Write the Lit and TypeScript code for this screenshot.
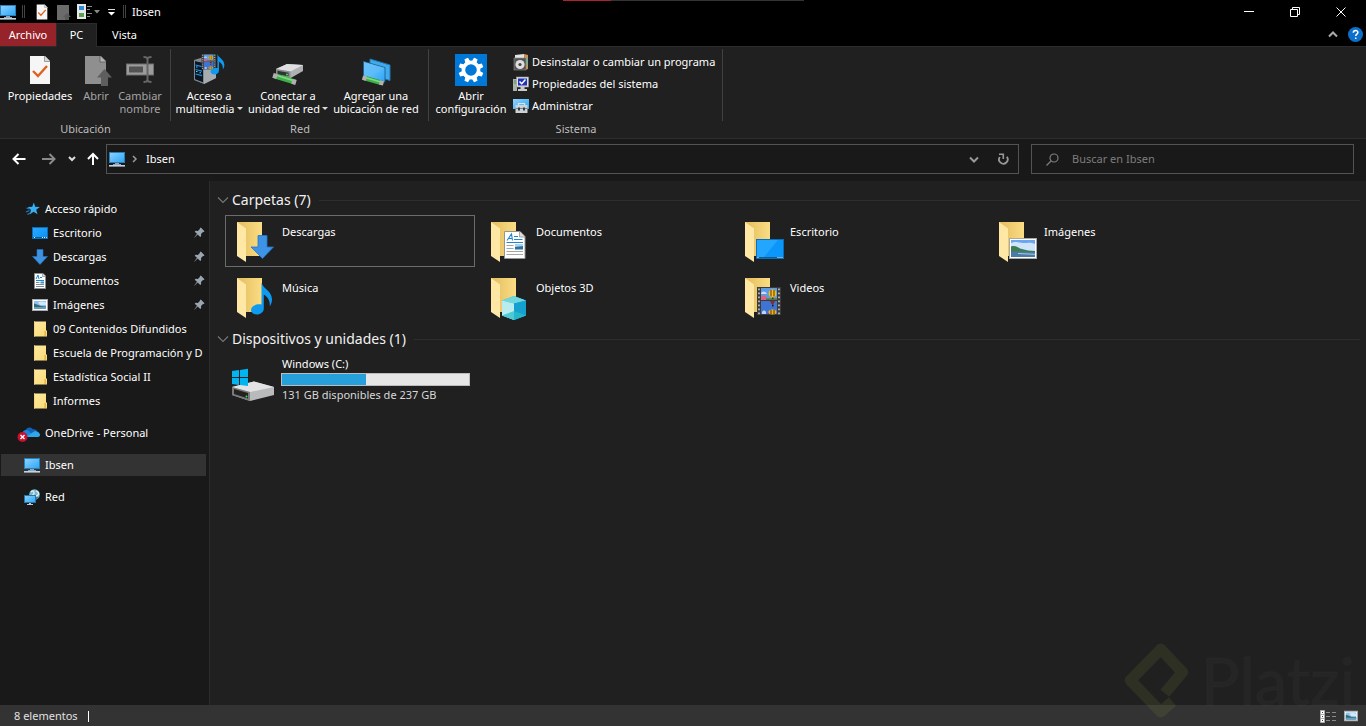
import { LitElement, html, css, svg, nothing, TemplateResult } from "lit";
import { customElement, state } from "lit/decorators.js";

type Art = TemplateResult;

/** Wraps drawing content in an <svg> of the given size. */
const icon = (w: number, h: number, art: Art, box = `0 0 ${w} ${h}`) =>
  html`<svg class="ico" width=${w} height=${h} viewBox=${box} aria-hidden="true">${art}</svg>`;

/* ---------- 16px artwork ---------- */
const pcArt = svg`
  <rect x="0.5" y="1.5" width="15" height="10" fill="url(#screen)" stroke="#2b7fb8"/>
  <path d="M6 12h4v1h2v1H4v-1h2z" fill="#8fa9bb"/>
  <rect x="0" y="14" width="16" height="1.6" fill="#c4d3e0"/>`;
const starArt = svg`
  <path d="M9.800 1.500l1.400 4.300 4.600.1-3.600 2.800 1.300 4.600-3.900-2.500-3.900 2.700 1.300-4.600L3.600 6l4.600-.2z" fill="#35b0f2"/>
  <path d="M2.500 7l3 1M2 11l3.500-1.500M3.500 13.500l2.500-1.500" stroke="#1e7fc0" stroke-width="1.200"/>`;
const deskArt = svg`
  <rect x="0.5" y="2.500" width="15" height="11" fill="url(#desk)" stroke="#0a6fb8"/>
  <path d="M1 12.500h14" stroke="#0b5c98"/><path d="M2 12.500h1M10 12.500h1M12 12.500h1M14 12.500h.8" stroke="#fff"/>`;
const downArt = svg`<path d="M5 .5h6v7h4.500L8 15.500.5 7.500H5z" fill="#3d93e0" stroke="#2275c4" stroke-width=".6"/>`;
const docArt = svg`
  <path d="M2.500.5h8.500l2.500 2.500v12.500h-11z" fill="#fff" stroke="#8d8d8d"/>
  <path d="M10.500.5v3h3" fill="#ddd" stroke="#8d8d8d" stroke-width=".7"/>
  <path d="M4 6l2-4 1 4M8 4.500h2M4 7.500h8" stroke="#1a86d0" fill="none"/>
  <path d="M4 9.500h3.500M4 11.500h8M4 13.500h8" stroke="#7c8a96"/><rect x="8.500" y="8.500" width="3.500" height="2" fill="#3f8fc4"/>`;
const photoArt = svg`
  <rect x=".5" y="2.500" width="15" height="11" fill="#fff" stroke="#a9a9a9"/>
  <rect x="2" y="4" width="12" height="8" fill="#8dc1ef"/><path d="M6 5.500c3-1.500 5-1 8 0V8H8z" fill="#d5e8fa"/>
  <path d="M2 6.500l3 1 4 1.500 5 .5V12H2z" fill="#2f6f72"/><path d="M2 10h12v2H2z" fill="#6d9cc0"/>`;
const folderArt = svg`
  <path d="M2 .5h12v9h1v6H2z" fill="url(#fold)"/><path d="M12.500 10h1.500v5h-1.500z" fill="#e2b74a"/>
  <path d="M2.500.5v15" stroke="#f8d675"/>`;
const netArt = svg`
  <circle cx="10.500" cy="5.500" r="5.300" fill="#7db8cf"/>
  <path d="M7 3c2-2 3-1 3 1s-2 2-2 3M12 2c3 1 3 3 2 4s-2 0-3 2" fill="none" stroke="#e3f3f7" stroke-width="1.300"/>
  <path d="M14.800 8a5.300 5.300 0 01-4 2.800V8z" fill="#3a7c9d"/>
  <rect x=".5" y="6.500" width="11" height="7" fill="url(#screen)" stroke="#2477ad"/>
  <path d="M5 14h2v1h2v1H3v-1h2z" fill="#b7cbd9"/>`;
const cloudArt = svg`
  <path d="M8.500 6.500c.8-3 5-4.200 7.500-1.200 2.500-.4 4 .7 4.200 2.700L14 11z" fill="#0f62b4"/>
  <path d="M7 12a3.200 3.200 0 01.8-5.800c2-.8 4 .2 5 1.600L17 13H9z" fill="#1884d8"/>
  <path d="M9 13l7.500-5.200C19 6.500 22.500 8 23 10.500c.2 1.500-.8 2.500-2 2.500z" fill="#30a7ea"/>
  <circle cx="5.500" cy="13" r="5" fill="#c8102e"/>
  <path d="M3.500 11l4 4m0-4l-4 4" stroke="#fff" stroke-width="1.400"/>`;
const pinArt = svg`<path d="M7.800.5L11.500 4.200l-.9.9-.6-.1-2 2.100.2 1.900-1 1L4.700 7.500.7 11.300 4 6.800 1.700 4.700l1-1 2.100.2L6.900 1.900l-.1-.6z" fill="#9aa5b0"/>`;

/* ---------- ribbon artwork ---------- */
const check = svg`
  <path d="M6 2h15l5 5v23H6z" fill="#f6f6f6"/><path d="M20.500 2v5.500H26" fill="#d6d6d6" stroke="#8c8c8c" stroke-width=".8"/>
  <path d="M9 17l5 5 9-10" fill="none" stroke="#e2601f" stroke-width="2.400"/>`;
const openArt = svg`
  <path d="M5 2h16l5 5v23H5z" fill="#8f8f8f"/><path d="M20 2v6h6" fill="#b5b5b5" stroke="#5c5c5c" stroke-width=".8"/>
  <path d="M24.500 15l7.500 8.500h-4V32h-7v-8.500h-4z" fill="#5e5e5e"/>`;
const renameArt = svg`
  <rect x="2.500" y="10" width="27" height="11" fill="#9c9c9c" stroke="#6f6f6f"/><rect x="5" y="12.500" width="14" height="6" fill="#535353"/>
  <path d="M19.500 3c2.500 0 4 .8 4 2 0-1.200 1.500-2 4-2M19.500 28c2.500 0 4-.8 4-2 0 1.200 1.500 2 4 2M23.500 5v21" fill="none" stroke="#666" stroke-width="2"/>`;
const film = svg`
  <rect width="24" height="28" fill="#3b3b3b"/><rect x="4" y="1" width="16" height="12" fill="#5d9be6"/><rect x="4" y="14" width="16" height="13" fill="#3f74d4"/>
  <path d="M4 10c2-2 4-2 6 1h10v2H4z" fill="#e0607f"/><path d="M9 11.500h11V13H9z" fill="#2c8a43"/><path d="M4 6c2-2 4-2 6 1H4z" fill="#c6dcf8"/>
  <ellipse cx="15.500" cy="6.500" rx="3.800" ry="4" fill="#f0c419"/><path d="M14 3v6.500M17 3v6.500" stroke="#6b2a1b" stroke-width="1"/><path d="M15 10.500h1.500V12H15z" fill="#4d2d12"/>
  <path d="M13 14h5l-1.500 3h-2z" fill="#832e2c"/><path d="M15 17.500h1.500v2H15z" fill="#2a1a12"/>
  <ellipse cx="15.500" cy="25" rx="4" ry="2.500" fill="#e7b91c"/><path d="M14 23v4M17 23v4" stroke="#6b2a1b" stroke-width="1"/><path d="M5 25c1-2 3-2 4 0v2H5z" fill="#bcd4f6"/>
  <path d="M2 1.500v26M22 1.500v26" stroke="#b9b9b9" stroke-width="1.800" stroke-dasharray="1.700 2.300"/>`;
const note = svg`<path d="M10.500 0c1 6 10.500 8 10.500 17 0 3-1 5-2.300 6.800C19.500 17 15 13 12.800 12.300V26c0 3.500-3.300 6-7 6C2.500 32 0 30.300 0 27.500 0 24 5 21 10.500 22z" fill="#0e9af0"/>`;
const mediaArt = svg`
  <path d="M1 6l10-3 12 3v18l-12 6-10-4z" fill="#85898e"/><path d="M1.500 6.500l9 2v20.500l-9-3.500z" fill="#0b1622" stroke="#7d8992" stroke-width="1"/><path d="M11 8.500l12-2.500v18l-12 6z" fill="#a7abb0"/>
  <path d="M2.500 11l6.500 1.600M2.500 15.500l6.500 1.600M2.500 20l6.500 1.600" stroke="#1e8fe0" stroke-width="1.200"/><path d="M3 13h1.500M6.500 18.800H8M3 17.500h1.500" stroke="#5fd0ff"/>
  <g transform="translate(8.500 0) scale(.6 .55)">${film}</g>
  <g transform="translate(17.500 0) scale(.66 .64)">${note}</g>`;
const tube = svg`
  <path d="M3 18l20 6" stroke="#3faf4a" stroke-width="5"/><path d="M5 17.500l16 4.800" stroke="#7ddc7e" stroke-width="1.800"/>
  <path d="M1 17.400l4 1.200M20 23.300l4 1.200" stroke="#b0b0b0" stroke-width="5"/>`;
const connectArt = svg`
  <g transform="translate(0 4)"><path d="M4 11l11-5 16 1v6l-14 8L4 17z" fill="#aeb0b3"/><path d="M4 11l11-5 16 1-12.500 6.500z" fill="#dedfe1"/>
  <path d="M4 11l14.500 2.500V20L4 17z" fill="#8b8e91"/><path d="M5.500 12.700l11 2v3.500l-11-2z" fill="#303336"/><circle cx="15" cy="16.500" r="1" fill="#50e04c"/>${tube}</g>`;
const addNetArt = svg`
  <path d="M10 5l20 6v15.500l-20-6z" fill="#3eaaf0" stroke="#2477ad"/><path d="M3.500 7.500l21.500 6v14.500l-21.500-6z" fill="url(#screen)" stroke="#1d5f8c" stroke-width=".9"/>
  <path d="M4 8l20 5.700L10 23l-6-1.500z" fill="#5cbcf9" opacity=".7"/><path d="M4 24l18 5" stroke="#3faf4a" stroke-width="4.500"/><path d="M5 23.500l15 4.200" stroke="#7ddc7e" stroke-width="1.500"/>
  <path d="M2.500 23.600l4 1.100M19.500 28.300l4 1.100" stroke="#b0b0b0" stroke-width="4.500"/>`;
const gearArt = svg`
  <rect width="32" height="32" fill="#0078d7"/><circle cx="16" cy="16" r="7.600" fill="none" stroke="#fff" stroke-width="3.600"/>
  ${[0, 45, 90, 135, 180, 225, 270, 315].map(a => svg`<path d="M13.400 8l.7-4.500h3.800l.7 4.500z" fill="#fff" transform="rotate(${a + 22.5} 16 16)"/>`)}`;
const uninstallArt = svg`
  <path d="M2 1l9-1v5H2z" fill="#e2e2e2"/><path d="M11 0l4 1v14l-3 1z" fill="#d8914d"/><path d="M11 4l4-1v7l-3 5z" fill="#7fb08b"/>
  <rect x="1" y="4" width="12" height="12" fill="#555" stroke="#8b8b8b" stroke-width=".6"/><circle cx="7" cy="10.500" r="4.600" fill="#dedede"/><circle cx="7" cy="10.500" r="1.600" fill="#444"/>`;
const sysArt = svg`
  <path d="M0 3h4v12H0z" fill="#a8b4a8"/><path d="M1 5h2M1 7h2" stroke="#4c8f51"/><rect x="3.500" y="1" width="12" height="10" fill="#e0e0e0" stroke="#9a9a9a" stroke-width=".6"/>
  <rect x="5" y="2.500" width="9" height="7" fill="#2034b8"/><path d="M6.500 5.500l2.200 2.200L12.500 3.500" stroke="#fff" stroke-width="1.500" fill="none"/><path d="M7.500 11h4v2H14v2H5v-2h2.500z" fill="#c9c9c9"/>`;
const adminArt = svg`
  <rect x="0" y="1" width="16" height="10" fill="url(#screen)"/><path d="M5.500 7V5.500h6V7" fill="none" stroke="#dce3e8" stroke-width="1.200"/>
  <rect x="2.500" y="7" width="12" height="8" fill="#cdd2d6"/><path d="M2.500 10.500h12" stroke="#75808a"/><path d="M5 9.500h2v3H5zM10 9.500h2v3h-2z" fill="#353d44"/>`;

/* ---------- 48px folder overlays ---------- */
const big = (over: Art) => icon(48, 48, svg`
  <path d="M9 5h25v34H9z" fill="url(#back)"/><path d="M9 5l9 6.500V45l-9-6z" fill="url(#flap)"/>${over}`);
const bigDown = svg`<path d="M30 18.500h9V30h6.500L34.500 41.500 23 30h7z" fill="#3d93e6" stroke="#1f76c9" stroke-width=".8"/>`;
const bigDoc = svg`
  <path d="M22.500 14.500h15.500l5 5V41.500H22.500z" fill="#fff" stroke="#949494"/><path d="M37.500 14.500v5.500h5.500" fill="#ddd" stroke="#949494" stroke-width=".8"/>
  <path d="M25 23.500l4.500-6.500 1 6.500M26.500 21.500h4M32 19.500h4M32 22.500h8.500M24.500 25.500h16.500" stroke="#1c86cf" stroke-width="1.100" fill="none"/>
  <path d="M24.500 28.500h7M24.500 31.500h7M24.500 34.500h16.500M24.500 37.500h16.500" stroke="#a5a5a5"/><rect x="33" y="27" width="8" height="5.500" fill="#2f6f9b"/><path d="M33 27h8v2l-8 1z" fill="#a8d4ef"/>`;
const bigDesk = svg`
  <rect x="20.500" y="22.500" width="27" height="19" fill="#0a96fb" stroke="#0a6fb8"/><path d="M21 23h21L28 40h-7z" fill="#23a6ff"/>
  <path d="M21 40.500h26" stroke="#0b5c98"/><path d="M21.500 40.500h1M41.500 40.500h1M43.500 40.500h1M45.500 40.500h1" stroke="#fff"/>`;
const bigPhoto = svg`
  <rect x="19.500" y="21.500" width="27" height="20" fill="#fff" stroke="#a9a9a9"/><rect x="21" y="23" width="24" height="17" fill="#6ea6ee"/>
  <path d="M21 26c5-2 8 0 12 0s8-1 12 1v7H21z" fill="#cfe5fb"/><path d="M21 29.500c3-1 6 0 9 2l8 2 7 .5v2H21z" fill="#3e7d55"/><path d="M21 34.500l24 .5v5H21z" fill="#4a7ba5"/><path d="M28 36.500l17 .8" stroke="#a9c9e2"/>`;
const bigCube = svg`
  <path d="M32 23l12 4.500v15L32 47l-12-4.500v-15z" fill="#1fb3cf"/><path d="M20 27.500L32 23l12 4.500-12 3z" fill="#6fd8dd"/>
  <path d="M20 27.500l12 3V47l-12-4.500z" fill="#b9ecee"/><path d="M32 30.500l12-3v15L32 47z" fill="#16a0d0"/><path d="M20 42.500l12-4.500 12 4.500L32 47z" fill="#2abfca" opacity=".75"/>`;
const bigDrive = icon(48, 48, svg`
  <path d="M4 31l22-5.500 20 5.500v8L22 45 4 39z" fill="#b9babc"/><path d="M4 31l22-5.500 20 5.500-24 5z" fill="#e3e3e5"/>
  <path d="M4 31l18 5v9L4 39z" fill="#77797b"/><path d="M6 33l14 4v5.500L6 38z" fill="#222"/><circle cx="18.500" cy="40.500" r="1" fill="#4be04b"/>
  <path d="M4 15l7-1v7H4zM12 14l8-1.300V21h-8zM4 22h7v7l-7-1zM12 22h8v8l-8-1z" fill="#00b5f0"/>`);

interface TreeItem { label: string; art: Art; level: number; pinned?: boolean; gap?: boolean; wide?: boolean }

const TREE: TreeItem[] = [
  { label: "Acceso rápido", art: starArt, level: 0 },
  { label: "Escritorio", art: deskArt, level: 1, pinned: true },
  { label: "Descargas", art: downArt, level: 1, pinned: true },
  { label: "Documentos", art: docArt, level: 1, pinned: true },
  { label: "Imágenes", art: photoArt, level: 1, pinned: true },
  { label: "09 Contenidos Difundidos", art: folderArt, level: 1 },
  { label: "Escuela de Programación y D", art: folderArt, level: 1 },
  { label: "Estadística Social II", art: folderArt, level: 1 },
  { label: "Informes", art: folderArt, level: 1 },
  { label: "OneDrive - Personal", art: cloudArt, level: 0, gap: true, wide: true },
  { label: "Ibsen", art: pcArt, level: 0, gap: true },
  { label: "Red", art: netArt, level: 0, gap: true },
];

const FOLDERS = [
  { label: "Descargas", art: bigDown },
  { label: "Documentos", art: bigDoc },
  { label: "Escritorio", art: bigDesk },
  { label: "Imágenes", art: bigPhoto },
  { label: "Música", art: svg`<g transform="translate(23 9.500)">${note}</g>` },
  { label: "Objetos 3D", art: bigCube },
  { label: "Videos", art: svg`<g transform="translate(21 14)">${film}</g>` },
];

@customElement("app-root")
export class AppRoot extends LitElement {
  static styles = css`
    :host {
      display: flex; flex-direction: column; min-height: 100vh; position: relative;
      background: #191919; color: #fff; overflow: hidden;
      font: 11px/16px "Noto Sans", "Open Sans", sans-serif;
    }
    * { box-sizing: border-box; }
    button, input { font: inherit; color: inherit; background: none; border: 0; padding: 0; margin: 0; border-radius: 0; }
    a { color: inherit; text-decoration: none; }
    svg { display: block; flex: none; }
    .ico { overflow: visible; }
    .defs { position: absolute; width: 0; height: 0; }

    .title { display: flex; height: 23px; background: #000; align-items: center; }
    .quick { display: flex; align-items: center; flex: 1; }
    .quick .sep { width: 3px; height: 13px; border: 1px solid #444; border-width: 0 1px; margin: 0 7px 0 6px; }
    .quick .sep.last { margin: 0 6px 0 3px; }
    .quick button { padding: 0 3px; }
    .quick button.tight { padding: 0 2px; }
    .name { font: inherit; margin: 0; }
    .win { display: flex; padding-right: 2px; }
    .win button { width: 46px; height: 22px; display: grid; place-items: center; }
    .accent { position: absolute; top: 0; left: 41.2%; width: 241px; height: 1px; background: #333; }
    .accent i { display: block; width: 48px; height: 1px; background: #b3202e; }

    .tabs { display: flex; height: 24px; background: #000; border-bottom: 1px solid #2b2b2b; }
    .tabs button { height: 23px; }
    .tabs .file { width: 56px; background: #96222a; }
    .tabs .active { width: 41px; height: 24px; background: #202020; border: 1px solid #2b2b2b; border-bottom: 0; padding-bottom: 2px; }
    .tabs .view { width: 55px; }
    .tabs .right { margin-left: auto; display: flex; align-items: center; gap: 10px; padding-right: 3px; }
    .help { width: 15px; height: 15px; }

    .ribbon { display: flex; height: 92px; background: #202020; border-bottom: 1px solid #2e2e2e; padding-top: 2px; }
    .group { display: flex; flex-direction: column; }
    .cmds { display: flex; height: 72px; border-right: 1px solid #414141; padding: 5px 6px 0 4px; }
    .network .cmds { padding: 5px 7px 0 2px; }
    .system .cmds { padding: 5px 5px 0 4px; }
    .group h2 { font: inherit; color: #bdbdbd; margin: 0; text-align: center; }
    .cmd { display: flex; flex-direction: column; align-items: center; justify-content: flex-start; gap: 3px; line-height: 13px; text-align: center; white-space: nowrap; }
    .cmd:disabled { color: #a5a5a5; }
    .w-props { width: 72px; } .w-open { width: 40px; } .w-ren { width: 48px; }
    .w-media { width: 72px; } .w-conn { width: 86px; } .w-add { width: 90px; } .w-conf { width: 76px; }
    .caret { display: inline-block; border: 3px solid transparent; border-top-color: #ddd; border-bottom: 0; margin-left: 2px; vertical-align: 3px; }
    .stack { display: flex; flex-direction: column; padding-left: 4px; width: 208px; margin-top: -3px; }
    .stack button { height: 22px; display: flex; align-items: center; gap: 3px; white-space: nowrap; }

    .bar { display: flex; align-items: flex-start; height: 42px; padding: 5px 12px 0; gap: 12px; }
    .move { display: flex; align-items: center; gap: 11px; }
    .nav { display: flex; align-items: center; flex: 1; gap: 7px; min-width: 0; }
    .address { flex: 1; display: flex; align-items: center; height: 30px; border: 1px solid #535353; padding-left: 2px; }
    .address .chev { margin: 0 8px 0 7px; }
    .address .push { margin-left: auto; width: 28px; }
    .address button { height: 28px; width: 30px; display: grid; place-items: center; }
    .search { flex: 0 1 323px; display: flex; align-items: center; height: 30px; border: 1px solid #535353; padding-left: 14px; gap: 13px; }
    .search input { flex: 1; min-width: 0; outline: 0; }
    .search input::placeholder { color: #7d7d7d; opacity: 1; }

    .body { flex: 1; display: flex; min-height: 0; }
    .side { width: 210px; padding: 16px 2px 0 0; border-right: 1px solid #2b2b2b; flex: none; }
    .side ul { list-style: none; margin: 0; padding: 0; }
    .side li.gap { margin-top: 8px; }
    .side a { display: flex; align-items: center; height: 24px; padding-left: 24px; gap: 5px; white-space: nowrap; }
    .side a.child { padding-left: 32px; }
    .side a.wide { padding-left: 17px; gap: 4px; }
    .side a.on { background: linear-gradient(#333, #333) 1px 1px / 205px 22px no-repeat; }
    .side .txt { flex: 1; }
    .side .pin { margin-right: 2px; }

    main { flex: 1; background: #202020; padding: 8px 6px 0 15px; min-width: 0; }
    section + section { margin-top: 5px; }
    .head { display: flex; align-items: center; height: 22px; width: calc(100% + 8px); margin: 0 0 4px -8px; gap: 8px; text-align: left; }
    .head h3 { font-size: 14px; line-height: 22px; font-weight: 400; margin: 0 0 0 -5px; color: #f2f2f2; }
    .rule { flex: 1; height: 1px; background: #2e2e2e; }
    .tiles { display: grid; grid-template-columns: repeat(auto-fill, 250px); gap: 4px; }
    .tile { display: flex; height: 52px; border: 1px solid transparent; padding: 1px 2px; gap: 6px; text-align: left; }
    .tile.focus { border-color: #6b6b6b; }
    .tile .lbl { padding-top: 7px; }
    .drive { display: flex; flex-direction: column; color: #d8d8d8; width: 189px; margin-left: -1px; }
    .drive span { padding-left: 1px; white-space: nowrap; }
    .drive .nm { color: #fff; }
    progress { appearance: none; -webkit-appearance: none; display: block; width: 189px; height: 13px; border: 1px solid #bcbcbc; margin: 1px 0; background: #e6e6e6; }
    progress::-webkit-progress-bar { background: #e6e6e6; }
    progress::-webkit-progress-value { background: #26a0da; }

    footer { display: flex; align-items: center; height: 21px; background: #333; padding: 1px 8px 0 14px; gap: 10px; color: #e0e0e0; }
    footer .tick { width: 1px; height: 11px; background: #fff; }
    footer .modes { margin-left: auto; display: flex; gap: 7px; }

    .mark { position: absolute; right: 11px; bottom: 6px; display: flex; align-items: center; gap: 10px; pointer-events: none; }
    .mark span { font: 65px/80px Lato, sans-serif; color: rgba(255, 255, 255, 0.022); -webkit-text-stroke: 2px rgba(255, 255, 255, 0.01); }
  `;

  @state() private selected = "Ibsen";
  @state() private query = "";

  private cmd(w: string, art: Art, lines: string[], opts: { off?: boolean; menu?: boolean } = {}) {
    return html`<button class="cmd ${w}" ?disabled=${opts.off}>
      ${icon(32, 32, art)}
      <span>${lines[0]}${lines[1] ? html`<br />${lines[1]}` : nothing}${opts.menu ? html`<i class="caret"></i>` : nothing}</span>
    </button>`;
  }

  private head(text: string) {
    return html`<button class="head">
      ${icon(12, 8, svg`<path d="M1 1.500l5 5 5-5" fill="none" stroke="#777" stroke-width="1.100"/>`)}
      <h3>${text}</h3><span class="rule"></span>
    </button>`;
  }

  private select(e: Event, label: string) {
    e.preventDefault();
    this.selected = label;
  }

  render() {
    return html`
      <svg class="defs" aria-hidden="true">
        <linearGradient id="screen" x2="1" y2="1"><stop stop-color="#8fd3ff"/><stop offset="1" stop-color="#2ba5f5"/></linearGradient>
        <linearGradient id="desk" x2="1" y2="1"><stop stop-color="#2aa9ff"/><stop offset="1" stop-color="#0a90f5"/></linearGradient>
        <linearGradient id="fold" x2="1" y2="1"><stop stop-color="#ffeaa5"/><stop offset="1" stop-color="#fbd973"/></linearGradient>
        <linearGradient id="back" x2="1"><stop stop-color="#e3bc5e"/><stop offset="1" stop-color="#fbdd84"/></linearGradient>
        <linearGradient id="flap" x2="1" y2="1"><stop stop-color="#ffe6a1"/><stop offset="1" stop-color="#ffe9a8"/></linearGradient>
      </svg>

      <header class="title">
        <div class="quick">
          ${icon(16, 16, pcArt)}<span class="sep"></span>
          <button class="tight" aria-label="Propiedades">${icon(16, 16, check, "1 1 30 30")}</button>
          <button aria-label="Abrir">${icon(16, 16, svg`<path d="M2 1h12v15H2z" fill="#6b6b6b"/><path d="M12 9l4 4h-2v3h-4v-3H8z" fill="#5a5a5a"/>`)}</button>
          <button class="tight" aria-label="Cambiar nombre">${icon(16, 16, svg`<rect x="1" width="9" height="15" fill="#e8e8e8"/><path d="M3 2h5v4H3z" fill="#2d8fd5"/><path d="M3 9h5v4H3z" fill="#5aa052"/><path d="M11 2.500h5M11 5.500h3M11 9.500h5M11 12.500h3" stroke="#8a8a8a"/>`)}</button>
          ${icon(6, 4, svg`<path d="M0 0h6L3 3.500z" fill="#8a8a8a"/>`)}
          <button aria-label="Personalizar barra de herramientas">${icon(14, 8, svg`<path d="M5 1.500h7" stroke="#ddd"/><path d="M5 4h7L8.500 7.500z" fill="#fff"/>`)}</button>
          <span class="sep last"></span>
          <h1 class="name">Ibsen</h1>
        </div>
        <div class="win">
          <button aria-label="Minimizar">${icon(10, 10, svg`<path d="M0 4.500h10" stroke="#fff"/>`)}</button>
          <button aria-label="Restaurar">${icon(10, 10, svg`<path d="M.5 2.500h7v7h-7zM2.500 2.500v-2h7v7h-2" fill="none" stroke="#fff"/>`)}</button>
          <button aria-label="Cerrar">${icon(10, 10, svg`<path d="M.5.5l9 9m0-9l-9 9" stroke="#fff"/>`)}</button>
        </div>
        <div class="accent"><i></i></div>
      </header>

      <nav class="tabs">
        <button class="file">Archivo</button>
        <button class="active">PC</button>
        <button class="view">Vista</button>
        <div class="right">
          <button aria-label="Minimizar la cinta">${icon(10, 7, svg`<path d="M1 5.500l4-4 4 4" fill="none" stroke="#aaa" stroke-width="2"/>`)}</button>
          <button class="help" aria-label="Ayuda">${icon(15, 15, svg`<circle cx="7.500" cy="7.500" r="7.500" fill="#0a70cc"/><path d="M5.300 5.700c0-3 4.600-2.900 4.600-.2 0 1.600-2.200 1.700-2.200 3.500M7.700 10.500v1.600" fill="none" stroke="#fff" stroke-width="1.500"/>`)}</button>
        </div>
      </nav>

      <div class="ribbon">
        <div class="group">
          <div class="cmds">
            ${this.cmd("w-props", check, ["Propiedades"])}
            ${this.cmd("w-open", openArt, ["Abrir"], { off: true })}
            ${this.cmd("w-ren", renameArt, ["Cambiar", "nombre"], { off: true })}
          </div>
          <h2>Ubicación</h2>
        </div>
        <div class="group network">
          <div class="cmds">
            ${this.cmd("w-media", mediaArt, ["Acceso a", "multimedia"], { menu: true })}
            ${this.cmd("w-conn", connectArt, ["Conectar a", "unidad de red"], { menu: true })}
            ${this.cmd("w-add", addNetArt, ["Agregar una", "ubicación de red"])}
          </div>
          <h2>Red</h2>
        </div>
        <div class="group system">
          <div class="cmds">
            ${this.cmd("w-conf", gearArt, ["Abrir", "configuración"])}
            <div class="stack">
              <button>${icon(16, 16, uninstallArt)}Desinstalar o cambiar un programa</button>
              <button>${icon(16, 16, sysArt)}Propiedades del sistema</button>
              <button>${icon(16, 16, adminArt)}Administrar</button>
            </div>
          </div>
          <h2>Sistema</h2>
        </div>
      </div>

      <div class="bar">
        <div class="nav">
          <div class="move">
            <button aria-label="Atrás">${icon(14, 12, svg`<path d="M13.500 6H2M6.500 1L1.500 6l5 5" fill="none" stroke="#fff" stroke-width="2"/>`)}</button>
            <button aria-label="Adelante" disabled>${icon(20, 12, svg`<path d="M5 6h12M12.500 1l5 5-5 5" fill="none" stroke="#8a8a8a" stroke-width="2"/>`)}</button>
            <button aria-label="Ubicaciones recientes">${icon(8, 6, svg`<path d="M1 1l3 3 3-3" fill="none" stroke="#ddd" stroke-width="2"/>`)}</button>
            <button aria-label="Subir">${icon(12, 14, svg`<path d="M6 13V2M1 7l5-5 5 5" fill="none" stroke="#fff" stroke-width="2"/>`)}</button>
          </div>
          <div class="address">
            ${icon(16, 16, pcArt)}
            <span class="chev">${icon(6, 8, svg`<path d="M1 1l3 3-3 3" fill="none" stroke="#999" stroke-width="1.500"/>`)}</span>
            <a href="#ibsen">Ibsen</a>
            <button class="push" aria-label="Ubicaciones anteriores">${icon(10, 7, svg`<path d="M1 1.500l4 4 4-4" fill="none" stroke="#999" stroke-width="2"/>`)}</button>
            <button aria-label="Actualizar">${icon(12, 12, svg`<path d="M9.800 3.800A4.300 4.300 0 112.800 4" fill="none" stroke="#999" stroke-width="1.800"/><path d="M2 1.300h4.300V6" fill="none" stroke="#999" stroke-width="1.600"/>`)}</button>
          </div>
        </div>
        <label class="search">
          ${icon(13, 13, svg`<circle cx="8" cy="5" r="4" fill="none" stroke="#7d7d7d" stroke-width="1.200"/><path d="M5 8L.5 12.500" stroke="#7d7d7d" stroke-width="1.200"/>`)}
          <input type="text" aria-label="Buscar en Ibsen" placeholder="Buscar en Ibsen" .value=${this.query}
            @input=${(e: Event) => (this.query = (e.target as HTMLInputElement).value)} />
        </label>
      </div>

      <div class="body">
        <nav class="side" aria-label="Panel de navegación">
          <ul>
            ${TREE.map(t => html`<li class=${t.gap ? "gap" : "row"}>
              <a href="#" class="${t.level ? "child" : "top"} ${t.wide ? "wide" : ""} ${t.label === this.selected ? "on" : ""}"
                @click=${(e: Event) => this.select(e, t.label)}>
                ${t.wide ? icon(24, 18, t.art) : icon(16, 16, t.art)}
                <span class="txt">${t.label}</span>
                ${t.pinned ? html`<span class="pin">${icon(12, 12, pinArt)}</span>` : nothing}
              </a>
            </li>`)}
          </ul>
        </nav>
        <main>
          <section>
            ${this.head("Carpetas (7)")}
            <div class="tiles">
              ${FOLDERS.map((f, i) => html`<button class="tile ${i === 0 ? "focus" : ""}">${big(f.art)}<span class="lbl">${f.label}</span></button>`)}
            </div>
          </section>
          <section>
            ${this.head("Dispositivos y unidades (1)")}
            <div class="tiles">
              <button class="tile">${bigDrive}
                <span class="drive">
                  <span class="nm">Windows (C:)</span>
                  <progress max="237" value="106" aria-label="Espacio usado en Windows (C:)"></progress>
                  <span>131 GB disponibles de 237 GB</span>
                </span>
              </button>
            </div>
          </section>
        </main>
      </div>

      <footer>
        <span>8 elementos</span><span class="tick"></span>
        <div class="modes">
          <button aria-label="Detalles">${icon(17, 13, svg`<path d="M.5.5h4v12h-4zM.5 4.500h4M.5 8.500h4" fill="#fff" stroke="#aaa"/><path d="M2 2.500h1M2 6.500h1M2 10.500h1" stroke="#444"/><path d="M6 2.500h4M12 2.500h4M6 6.500h4M12 6.500h4M6 10.500h4M12 10.500h4" stroke="#888"/>`)}</button>
          <button aria-label="Iconos grandes">${icon(14, 12, photoArt, "0 2 16 12")}</button>
        </div>
      </footer>

      <div class="mark" aria-hidden="true">
        <svg width="68" height="80" viewBox="70 30 205 240"><path d="M196 190L249 126 184 57 92 151 184 246 219 215" fill="none" stroke="#a4c639" stroke-opacity=".1" stroke-width="34" stroke-linejoin="round"/></svg>
        <span>Platzi</span>
      </div>
    `;
  }
}
